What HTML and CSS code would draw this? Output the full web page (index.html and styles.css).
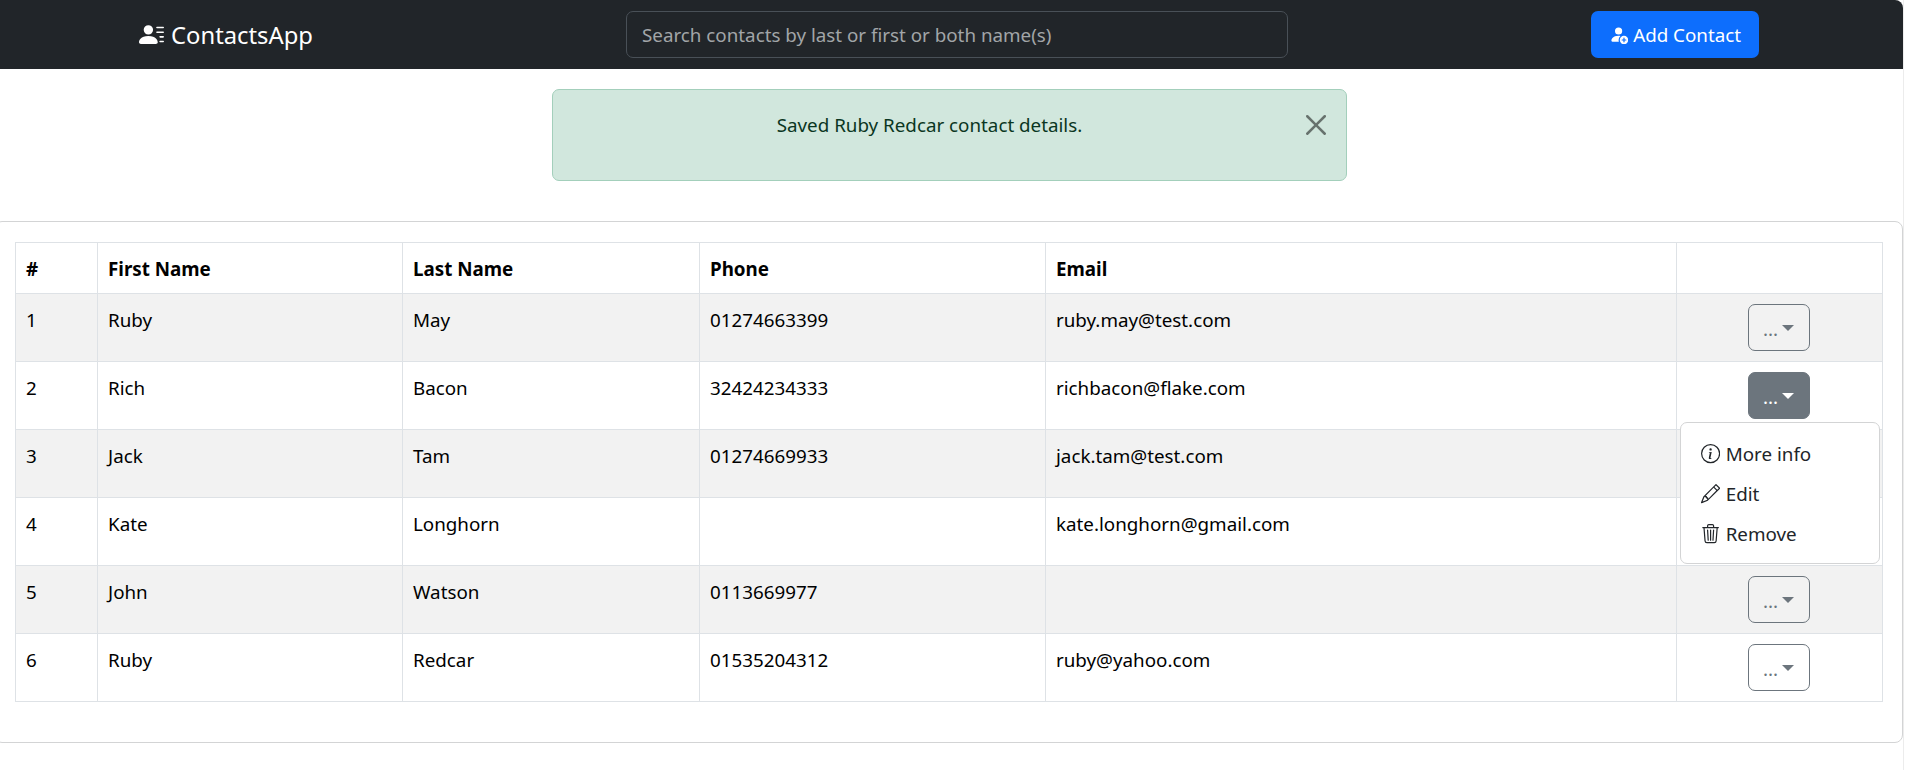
FILE: index.html
```html
<!DOCTYPE html>
<html lang="en">
<head>
  <meta charset="UTF-8">
  <title>ContactsApp</title>
  <link rel="stylesheet" href="styles.css">
</head>
<body>

  <div class="page">
    <nav class="navbar">
      <a class="brand" href="#">
        <svg class="brand-icon" viewBox="0 0 16 16" fill="currentColor"><path d="M6 8a3 3 0 1 0 0-6 3 3 0 0 0 0 6zm-5 6s-1 0-1-1 1-4 6-4 6 3 6 4-1 1-1 1H1zM11 3.5a.5.5 0 0 1 .5-.5h4a.5.5 0 0 1 0 1h-4a.5.5 0 0 1-.5-.5zm.5 2.5a.5.5 0 0 0 0 1h4a.5.5 0 0 0 0-1h-4zm2 3a.5.5 0 0 0 0 1h2a.5.5 0 0 0 0-1h-2zm0 3a.5.5 0 0 0 0 1h2a.5.5 0 0 0 0-1h-2z"/></svg>
        <span class="brand-name">ContactsApp</span>
      </a>
      <input class="search" type="text" placeholder="Search contacts by last or first or both name(s)">
      <button class="add-btn">
        <svg class="icon" viewBox="0 0 16 16" fill="currentColor"><path d="M12.5 16a3.5 3.5 0 1 0 0-7 3.5 3.5 0 0 0 0 7Zm.5-5v1h1a.5.5 0 0 1 0 1h-1v1a.5.5 0 0 1-1 0v-1h-1a.5.5 0 0 1 0-1h1v-1a.5.5 0 0 1 1 0Zm-2-6a3 3 0 1 1-6 0 3 3 0 0 1 6 0Z"/><path d="M2 13c0 1 1 1 1 1h5.256A4.493 4.493 0 0 1 8 12.5a4.49 4.49 0 0 1 1.544-3.393C9.077 9.038 8.564 9 8 9c-5 0-6 3-6 4Z"/></svg>
        <span class="add-label">Add Contact</span>
      </button>
    </nav>

    <div class="alert">
      Saved Ruby Redcar contact details.
      <button class="alert-close">
        <svg viewBox="0 0 16 16" fill="currentColor"><path d="M.293.293a1 1 0 0 1 1.414 0L8 6.586 14.293.293a1 1 0 1 1 1.414 1.414L9.414 8l6.293 6.293a1 1 0 0 1-1.414 1.414L8 9.414l-6.293 6.293a1 1 0 0 1-1.414-1.414L6.586 8 .293 1.707a1 1 0 0 1 0-1.414z"/></svg>
      </button>
    </div>

    <div class="card">
      <table class="contacts">
        <colgroup>
          <col class="col-num"><col class="col-first"><col class="col-last"><col class="col-phone"><col class="col-email"><col class="col-actions">
        </colgroup>
        <thead>
          <tr><th>#</th><th>First Name</th><th>Last Name</th><th>Phone</th><th>Email</th><th></th></tr>
        </thead>
        <tbody>
          <tr>
            <td>1</td><td>Ruby</td><td>May</td><td>01274663399</td><td>ruby.may@test.com</td>
            <td class="actions"><div class="dropdown"><button class="menu-btn">...</button></div></td>
          </tr>
          <tr>
            <td>2</td><td>Rich</td><td>Bacon</td><td>32424234333</td><td>richbacon@flake.com</td>
            <td class="actions">
              <div class="dropdown">
                <button class="menu-btn open">...</button>
                <ul class="menu">
                  <li>
                    <svg class="icon" viewBox="0 0 16 16" fill="currentColor"><path d="M8 15A7 7 0 1 1 8 1a7 7 0 0 1 0 14zm0 1A8 8 0 1 0 8 0a8 8 0 0 0 0 16z"/><path d="m8.93 6.588-2.29.287-.082.38.45.083c.294.07.352.176.288.469l-.738 3.468c-.194.897.105 1.319.808 1.319.545 0 1.178-.252 1.465-.598l.088-.416c-.2.176-.492.246-.686.246-.275 0-.375-.193-.304-.533L8.93 6.588zM9 4.5a1 1 0 1 1-2 0 1 1 0 0 1 2 0z"/></svg>
                    More info
                  </li>
                  <li>
                    <svg class="icon" viewBox="0 0 16 16" fill="currentColor"><path d="M12.146.146a.5.5 0 0 1 .708 0l3 3a.5.5 0 0 1 0 .708l-10 10a.5.5 0 0 1-.168.11l-5 2a.5.5 0 0 1-.65-.65l2-5a.5.5 0 0 1 .11-.168l10-10zM11.207 2.5 13.5 4.793 14.793 3.5 12.5 1.207 11.207 2.5zm1.586 3L10.5 3.207 4 9.707V10h.5a.5.5 0 0 1 .5.5v.5h.5a.5.5 0 0 1 .5.5v.5h.293l6.5-6.5zm-9.761 5.175-.106.106-1.528 3.821 3.821-1.528.106-.106A.5.5 0 0 1 5 12.5V12h-.5a.5.5 0 0 1-.5-.5V11h-.5a.5.5 0 0 1-.468-.325z"/></svg>
                    Edit
                  </li>
                  <li>
                    <svg class="icon" viewBox="0 0 16 16" fill="currentColor"><path d="M6.5 1h3a.5.5 0 0 1 .5.5v1H6v-1a.5.5 0 0 1 .5-.5ZM11 2.5v-1A1.5 1.5 0 0 0 9.5 0h-3A1.5 1.5 0 0 0 5 1.5v1H2.506a.58.58 0 0 0-.01 0H1.5a.5.5 0 0 0 0 1h.538l.853 10.66A2 2 0 0 0 4.885 16h6.23a2 2 0 0 0 1.994-1.84l.853-10.66h.538a.5.5 0 0 0 0-1h-.997a.58.58 0 0 0-.01 0H11Zm1.958 1-.846 10.58a1 1 0 0 1-.997.92h-6.23a1 1 0 0 1-.997-.92L3.042 3.5h9.916Zm-7.487 1a.5.5 0 0 1 .528.47l.5 8.5a.5.5 0 0 1-.998.06L5 5.03a.5.5 0 0 1 .47-.53Zm5.058 0a.5.5 0 0 1 .47.53l-.5 8.5a.5.5 0 1 1-.998-.06l.5-8.5a.5.5 0 0 1 .528-.47ZM8 4.5a.5.5 0 0 1 .5.5v8.5a.5.5 0 0 1-1 0V5a.5.5 0 0 1 .5-.5Z"/></svg>
                    Remove
                  </li>
                </ul>
              </div>
            </td>
          </tr>
          <tr>
            <td>3</td><td>Jack</td><td>Tam</td><td>01274669933</td><td>jack.tam@test.com</td>
            <td class="actions"></td>
          </tr>
          <tr>
            <td>4</td><td>Kate</td><td>Longhorn</td><td></td><td>kate.longhorn@gmail.com</td>
            <td class="actions"></td>
          </tr>
          <tr>
            <td>5</td><td>John</td><td>Watson</td><td>0113669977</td><td></td>
            <td class="actions"><div class="dropdown"><button class="menu-btn">...</button></div></td>
          </tr>
          <tr>
            <td>6</td><td>Ruby</td><td>Redcar</td><td>01535204312</td><td>ruby@yahoo.com</td>
            <td class="actions"><div class="dropdown"><button class="menu-btn">...</button></div></td>
          </tr>
        </tbody>
      </table>
    </div>
  </div>

</body>
</html>
```

FILE: styles.css
```css
html, body {
  margin: 0;
  background: #fff;
}
body {
  font-family: "Noto Sans", "Open Sans", sans-serif;
  font-size: 18.8px;
  line-height: 28.8px;
  color: #212529;
  overflow: hidden;
}
button, input {
  font: inherit;
}
.page {
  width: 1903px;
  min-height: 770px;
  border-right: 1px solid #ececec;
}
.icon {
  width: 19.2px;
  height: 19.2px;
  flex: none;
}

/* navbar */
.navbar {
  display: grid;
  grid-template-columns: 626px 662px 1fr;
  align-items: center;
  height: 69px;
  background: #212529;
  border-top-right-radius: 8px;
}
.brand {
  display: flex;
  align-items: center;
  gap: 7px;
  padding-left: 139px;
  color: #fff;
  font-size: 23.8px;
  text-decoration: none;
}
.brand-icon {
  width: 25px;
  height: 25px;
}
.brand-name {
  padding-top: 2px;
}
.search {
  box-sizing: border-box;
  height: 47px;
  padding: 0 15px;
  color: #fff;
  background: #212529;
  border: 1px solid #495057;
  border-radius: 7px;
  outline: none;
}
.search::placeholder {
  color: #a2a5a8;
}
.add-btn {
  display: flex;
  align-items: center;
  justify-content: center;
  gap: 5px;
  width: 168px;
  height: 47px;
  margin-left: 303px;
  color: #fff;
  background: #0d6efd;
  border: 0;
  border-radius: 7px;
}
.add-label {
  padding-top: 2px;
}

/* alert */
.alert {
  position: relative;
  box-sizing: border-box;
  width: 795px;
  height: 92px;
  margin: 20px 0 0 552px;
  padding: 21px 60px 0 20px;
  text-align: center;
  color: #0a3622;
  background: #d1e7dd;
  border: 1px solid #a3cfbb;
  border-radius: 7px;
}
.alert-close {
  position: absolute;
  top: 25px;
  right: 20px;
  width: 20px;
  height: 20px;
  padding: 0;
  color: #000;
  background: none;
  border: 0;
  opacity: 0.5;
}
.alert-close svg {
  display: block;
  width: 20px;
  height: 20px;
}

/* card + table */
.card {
  box-sizing: border-box;
  height: 522px;
  margin: 40px 0 0 -6px;
  padding: 20px 20px 0 20px;
  border: 1px solid #d3d4d5;
  border-radius: 8px;
}
.contacts {
  table-layout: fixed;
  width: 1868px;
  border-collapse: collapse;
  color: #000;
}
.col-num { width: 82px; }
.col-first { width: 305px; }
.col-last { width: 297px; }
.col-phone { width: 346px; }
.col-email { width: 631px; }
.col-actions { width: 206px; }
.contacts th, .contacts td {
  box-sizing: border-box;
  padding: 12px 10px 0;
  text-align: left;
  vertical-align: top;
  border: 1px solid #dee2e6;
}
.contacts th {
  height: 51px;
  font-weight: 700;
}
.contacts td {
  height: 68px;
}
.contacts tbody tr:nth-child(odd) td {
  background: #f2f2f2;
}
.contacts td.actions {
  padding: 10px 2px 0 0;
  text-align: center;
}

/* row dropdown */
.dropdown {
  position: relative;
  display: inline-block;
  vertical-align: top;
}
.menu-btn {
  display: flex;
  align-items: center;
  justify-content: center;
  gap: 4px;
  box-sizing: border-box;
  width: 62px;
  height: 47px;
  padding: 4px 0 0;
  color: #6c757d;
  background: transparent;
  border: 1px solid #6c757d;
  border-radius: 7px;
}
.menu-btn::after {
  content: "";
  margin-bottom: 4px;
  border-top: 6px solid;
  border-left: 6px solid transparent;
  border-right: 6px solid transparent;
}
.menu-btn.open {
  color: #fff;
  background: #6c757d;
}
.menu {
  position: absolute;
  top: 50px;
  left: -68px;
  z-index: 10;
  box-sizing: border-box;
  width: 200px;
  height: 142px;
  margin: 0;
  padding: 11px 0 9px;
  list-style: none;
  text-align: left;
  color: #212529;
  background: #fff;
  border: 1px solid #d3d4d5;
  border-radius: 7px;
}
.menu li {
  display: flex;
  align-items: center;
  gap: 6px;
  height: 40px;
  padding-left: 20px;
}
```
